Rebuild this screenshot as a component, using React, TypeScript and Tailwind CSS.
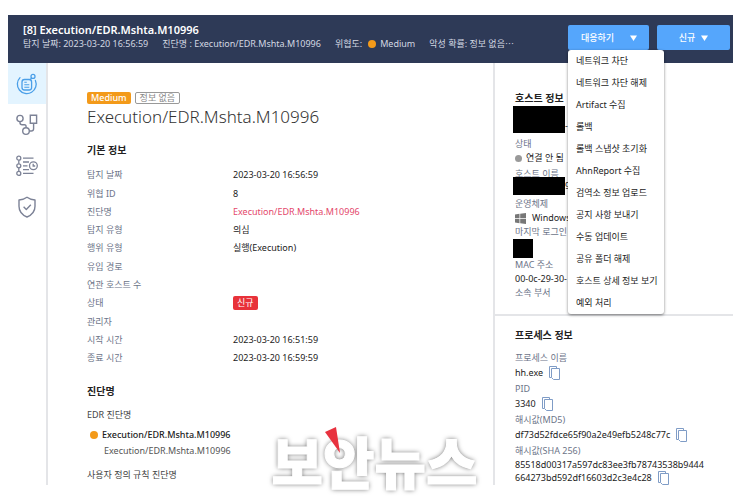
import React, {useState} from "react";

interface Row {
    label: string;
    value?: React.ReactNode;
}

const rows: Row[] = [
    {label: "탐지 날짜", value: "2023-03-20 16:56:59"},
    {label: "위협 ID", value: "8"},
    {label: "진단명", value: <a href="#detection" className="text-[#e4476b]">Execution/EDR.Mshta.M10996</a>},
    {label: "탐지 유형", value: "의심"},
    {label: "행위 유형", value: "실행(Execution)"},
    {label: "유입 경로"},
    {label: "연관 호스트 수"},
    {label: "상태", value: <span className="block rounded-[2px] bg-[#e8323a] px-1 leading-[14px] text-white">신규</span>},
    {label: "관리자"},
    {label: "시작 시간", value: "2023-03-20 16:51:59"},
    {label: "종료 시간", value: "2023-03-20 16:59:59"},
];

const actions = [
    "네트워크 차단",
    "네트워크 차단 해제",
    "Artifact 수집",
    "롤백",
    "롤백 스냅샷 초기화",
    "AhnReport 수집",
    "검역소 정보 업로드",
    "공지 사항 보내기",
    "수동 업데이트",
    "공유 폴더 해제",
    "호스트 상세 정보 보기",
    "예외 처리",
];

function Caret() {
    return (
        <svg width="7" height="6" viewBox="0 0 7 6" fill="currentColor" aria-hidden="true">
            <path d="M0 0.5h7L3.5 6z"/>
        </svg>
    )
}

function CopyButton({label}: { label: string }) {
    return (
        <button type="button" aria-label={label} className="shrink-0 text-[#7f9cc6] hover:cursor-pointer">
            <svg width="11" height="14" viewBox="0 0 11 14" fill="none" stroke="currentColor">
                <path d="M2.5 11.5h-2v-11h7v2"/>
                <path d="M2.5 2.5h8v11h-6l-2-2z" fill="white"/>
            </svg>
        </button>
    )
}

function OverviewIcon() {
    return (
        <svg width="22" height="22" viewBox="0 0 22 22" fill="none" stroke="currentColor" strokeWidth="1.3">
            <path d="M4 4.6A9.4 9.4 0 1 0 19.4 7.4" strokeLinecap="round"/>
            <circle cx="17" cy="3.4" r="2"/>
            <path d="M15.6 5L14.2 6.6"/>
            <rect x="6" y="6.5" width="9.6" height="10.5" rx="2.5"/>
            <path d="M8.3 9.3h2.5M8.3 11.8h5M8.3 14.3h5" strokeWidth="1.1"/>
        </svg>
    )
}

function DiagramIcon() {
    return (
        <svg width="22" height="22" viewBox="0 0 22 22" fill="none" stroke="currentColor" strokeWidth="1.4">
            <circle cx="4" cy="4.5" r="3.1"/>
            <path d="M14.3 1.2h6.3v8h-6.3z"/>
            <path d="M4 7.6v1.2c0 1.5 1 2 2.2 2h2.3c1 0 1.6.7 1.6 2v.8"/>
            <circle cx="10" cy="17.1" r="3.3"/>
            <path d="M13.3 17h1.9c1.6 0 2.4-.8 2.4-2.3V9.2"/>
        </svg>
    )
}

function TimelineIcon() {
    return (
        <svg width="22" height="22" viewBox="0 0 22 22" fill="none" stroke="currentColor" strokeWidth="1.3">
            <circle cx="2.8" cy="3.2" r="2"/>
            <circle cx="2.8" cy="10.8" r="2"/>
            <circle cx="2.8" cy="18.4" r="2"/>
            <path d="M2.8 5.2v3.6M2.8 12.8v3.6"/>
            <path d="M7 3.2h10.5M7 7h6M7 10.8h4.5M7 14.6h6M7 18.4h10.5"/>
            <circle cx="17.4" cy="10.8" r="3.9"/>
            <path d="M17.2 8.7v2.3h2"/>
        </svg>
    )
}

function ShieldIcon() {
    return (
        <svg width="22" height="22" viewBox="0 0 22 22" fill="none" stroke="currentColor" strokeWidth="1.4" strokeLinejoin="round">
            <path d="M11 1.2c2.3 1.7 5 2.6 8 2.8v6.2c0 5-3 8.6-8 10.8-5-2.2-8-5.8-8-10.8V4c3-.2 5.7-1.1 8-2.8z"/>
            <path d="M7.6 10.8l2.7 2.6 4.5-4.6"/>
        </svg>
    )
}

const tabs = [
    {name: "개요", icon: <OverviewIcon/>},
    {name: "다이어그램", icon: <DiagramIcon/>},
    {name: "타임라인", icon: <TimelineIcon/>},
    {name: "보호", icon: <ShieldIcon/>},
];

function Header() {
    const [open, setOpen] = useState<boolean>(true);

    return (
        <header className="flex h-12 justify-between bg-[#2e3a57] pl-[15px] pr-[3px] pt-2">
            <div className="whitespace-nowrap">
                <h1 className="text-[11px] font-semibold leading-[14px] text-white">[8] Execution/EDR.Mshta.M10996</h1>
                <div className="flex gap-3.5 text-[9px] leading-[14px] text-[#d3d8e2]">
                    <span>탐지 날짜: 2023-03-20 16:56:59</span>
                    <span>진단명 : Execution/EDR.Mshta.M10996</span>
                    <span className="flex items-center">위협도:
                        <span className="ml-1.5 mr-1 size-2 rounded-full bg-[#f39a1a]"></span>Medium</span>
                    <span>악성 확률: 정보 없음<span className="font-['Noto_Sans_CJK_JP',sans-serif]">…</span></span>
                </div>
            </div>

            <div className="flex items-start gap-2 pt-0.5 text-[9px] text-white">
                <div className="relative">
                    <button type="button" aria-expanded={open}
                            className="flex h-[25px] w-[81px] items-center justify-between rounded-[2px] bg-[#55a6fc] pl-[13px] pr-3 font-medium hover:cursor-pointer"
                            onClick={() => setOpen(!open)}>
                        대응하기 <Caret/></button>

                    {
                        open &&
                        <ul className="absolute left-0 top-full z-10 w-24 rounded-[3px] bg-white text-[#222] shadow-[0_1px_3px_rgba(0,0,0,0.5)]">
                            {actions.map((action) => (
                                <li key={action}>
                                    <button type="button" className="block h-[22px] w-full whitespace-nowrap pl-2 text-left hover:cursor-pointer">{action}</button>
                                </li>
                            ))}
                        </ul>
                    }
                </div>
                <button type="button" className="flex h-[25px] w-[73px] items-center justify-center gap-1.5 rounded-[2px] bg-[#55a6fc] font-medium hover:cursor-pointer">
                    신규 <Caret/></button>
            </div>
        </header>
    )
}

function DetectionInfo() {
    return (
        <section className="min-w-0 flex-1 pl-[39px] pt-[29px] text-[9px]">
            <div className="flex gap-1 leading-[12px]">
                <span className="rounded-[2px] bg-[#f39a1a] px-1 font-medium text-white">Medium</span>
                <span className="rounded-[2px] border border-[#999] px-1 leading-[10px] text-[#888]">정보 없음</span>
            </div>
            <h2 className="text-[17px] font-light leading-[26px] text-[#333]">Execution/EDR.Mshta.M10996</h2>

            <h3 className="mt-3 text-[10px] font-bold leading-4">기본 정보</h3>
            <dl className="mt-2 flex h-[201px] flex-col justify-between">
                {rows.map((row) => (
                    <div className="flex h-[18px] items-center" key={row.label}>
                        <dt className="w-[146px] text-[#6c7488]">{row.label}</dt>
                        <dd>{row.value}</dd>
                    </div>
                ))}
            </dl>

            <h3 className="mt-4 text-[10px] font-bold leading-4">진단명</h3>
            <p className="mt-2 leading-4 text-[#444]">EDR 진단명</p>
            <div className="mt-1 flex items-center gap-1 pl-[3px] font-medium leading-4">
                <span className="size-2 rounded-full bg-[#f39a1a]"></span>Execution/EDR.Mshta.M10996
            </div>
            <p className="pl-[17px] leading-4 text-[#555]">Execution/EDR.Mshta.M10996</p>
            <p className="mt-2 leading-4 text-[#444]">사용자 정의 규칙 진단명</p>
        </section>
    )
}

function HostInfo() {
    return (
        <section className="h-[251px] pl-5 pt-[27px] text-[9px] leading-[14px]">
            <h3 className="text-[10px] font-bold leading-4">호스트 정보</h3>
            <div className="-ml-0.5 flex items-end">
                <span className="h-[27px] w-[52px] bg-black"></span>-
            </div>
            <p className="mt-1 text-[#6c7488]">상태</p>
            <p className="flex items-center gap-1"><span className="size-[7px] rounded-full bg-[#999]"></span>연결 안 됨</p>
            <p className="mt-0.5 text-[#6c7488]">호스트 이름</p>
            <div className="relative -ml-0.5 -mt-1 flex items-center">
                <span className="h-[18px] w-[52px] bg-black"></span>9
            </div>
            <p className="mt-0.5 text-[#6c7488]">운영체제</p>
            <p className="flex items-center gap-1.5">
                <svg width="11" height="11" viewBox="0 0 11 11" fill="#777" aria-hidden="true">
                    <path d="M0 1.5l4.5-.7v4.4H0zM5.2.7L11 0v5.2H5.2zM0 5.9h4.5v4.3L0 9.6zM5.2 5.9H11V11l-5.8-.7z"/>
                </svg>
                Windows
            </p>
            <p className="text-[#6c7488]">마지막 로그인</p>
            <div className="-ml-0.5 h-[19px] w-5 bg-black"></div>
            <p className="text-[#6c7488]">MAC 주소</p>
            <p>00-0c-29-30-</p>
            <p className="text-[#6c7488]">소속 부서</p>
        </section>
    )
}

function ProcessInfo() {
    return (
        <section className="border-t-2 border-[#e4e5e8] pl-5 pt-[11px] text-[9px]">
            <h3 className="text-[10px] font-bold leading-4">프로세스 정보</h3>
            <dl className="mt-[7px] leading-4 [&>dt]:leading-[15px] [&>dt]:text-[#6c7488]">
                <dt>프로세스 이름</dt>
                <dd className="flex gap-1.5">hh.exe <CopyButton label="프로세스 이름 복사"/></dd>
                <dt>PID</dt>
                <dd className="flex gap-1.5">3340 <CopyButton label="PID 복사"/></dd>
                <dt>해시값(MD5)</dt>
                <dd className="flex gap-1.5">df73d52fdce65f90a2e49efb5248c77c <CopyButton label="MD5 복사"/></dd>
                <dt>해시값(SHA 256)</dt>
                <dd className="leading-[13px]">
                    85518d00317a597dc83ee3fb78743538b9444
                    <span className="flex gap-1.5">664273bd592df16603d2c3e4c28 <CopyButton label="SHA 256 복사"/></span>
                </dd>
            </dl>
        </section>
    )
}

function Watermark() {
    return (
        <div className="pointer-events-none absolute inset-x-0 -bottom-3 flex justify-center pl-2">
            <div className="relative text-[56px] font-black leading-[70px] text-white [-webkit-text-stroke:1px_white] [text-shadow:0_0_5px_rgba(0,0,0,0.6)]">
                보안뉴스
                <svg className="absolute left-[54px] top-0" width="16" height="27" viewBox="0 0 16 27" aria-hidden="true">
                    <path d="M0 5L11 0l4 26z" fill="#e8323f"/>
                </svg>
            </div>
        </div>
    )
}

function App() {
    return (
        <div className="bg-white pb-[19px] pl-2 pr-[17px] pt-[15px] font-['Noto_Sans','Noto_Sans_CJK_KR',sans-serif] text-[#222]">
            <Header/>
            <main className="relative flex">
                <nav className="w-10 shrink-0 border-r-2 border-[#e4e5e8]">
                    {tabs.map((tab, index) => (
                        <button type="button" key={tab.name} aria-label={tab.name}
                                className={"flex h-[41px] w-full items-center justify-center hover:cursor-pointer " + (index === 0 ? "bg-[#e3f4ff] text-[#4a9fe8]" : "text-[#7c8296]")}>
                            {tab.icon}
                        </button>
                    ))}
                </nav>
                <DetectionInfo/>
                <aside className="w-60 shrink-0 border-l-2 border-[#e4e5e8]">
                    <HostInfo/>
                    <ProcessInfo/>
                </aside>
                <Watermark/>
            </main>
        </div>
    )
}

export default App;
